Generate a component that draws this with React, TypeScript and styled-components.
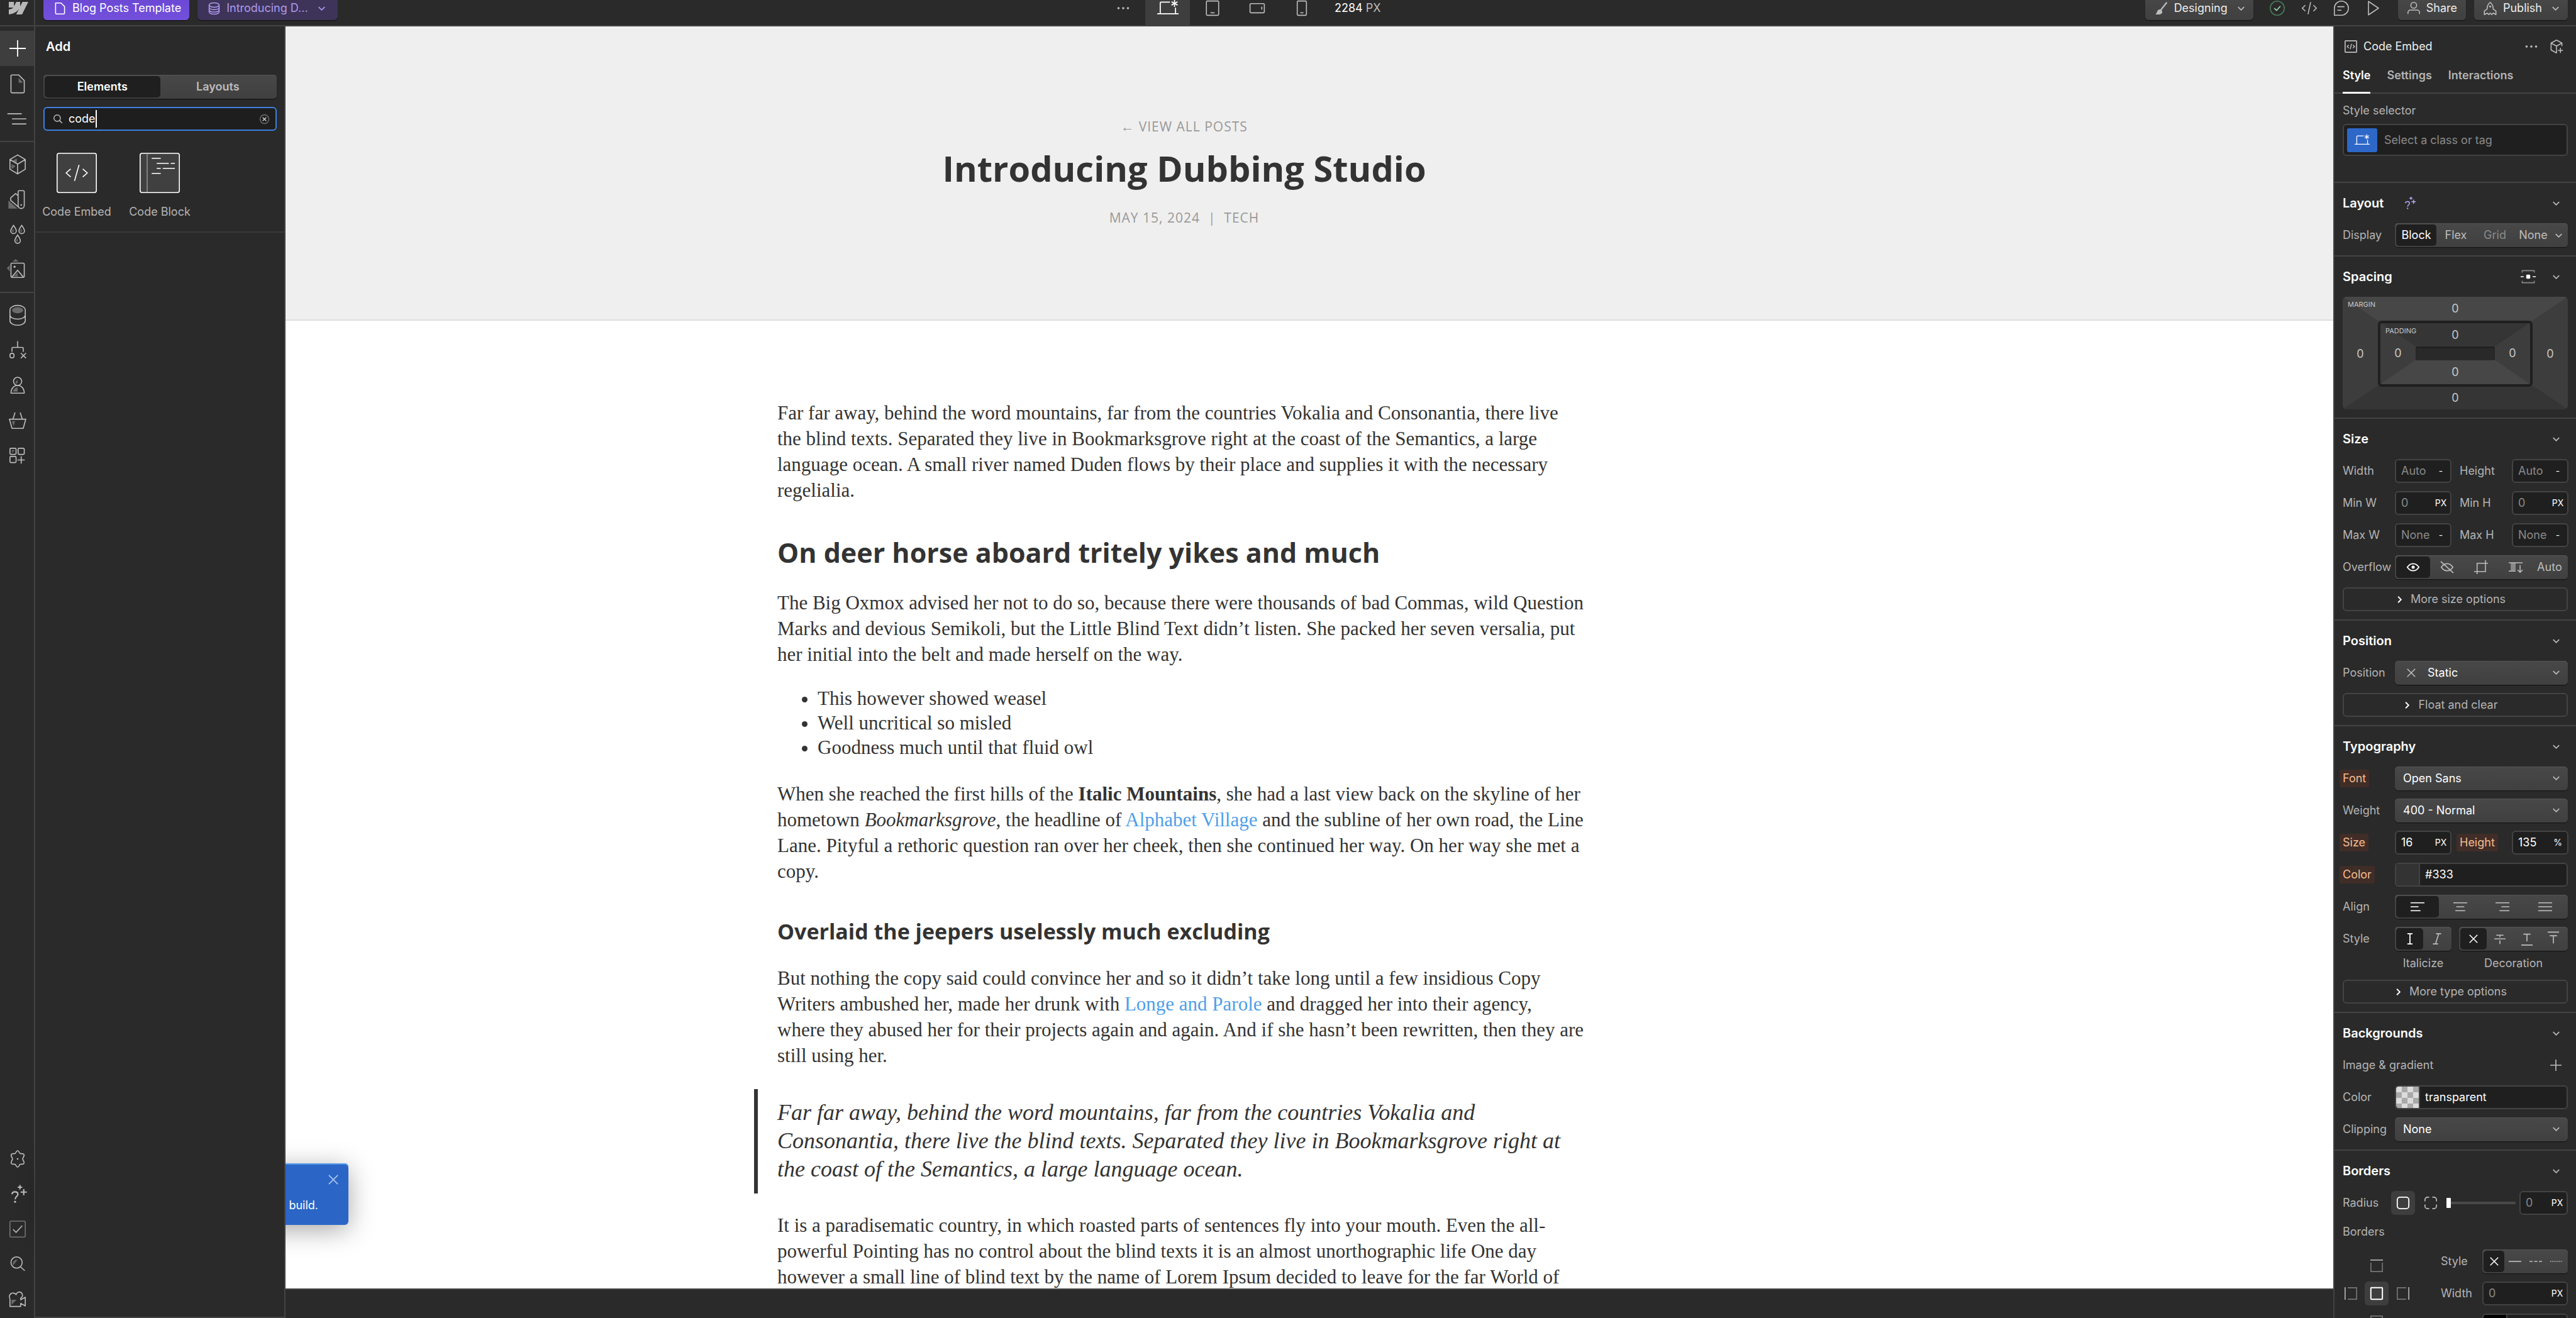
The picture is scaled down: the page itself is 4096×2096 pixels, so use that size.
import React from "react";
import styled, { createGlobalStyle, css } from "styled-components";

const c = {
  bg: "#2a2a2a",
  line: "#434343",
  field: "#1f1f1f",
  active: "#3e3e3e",
  label: "#b4b4b4",
  icon: "#bdbdbd",
  white: "#ffffff",
  muted: "#8a8a8a",
  ink: "#333333",
};

const Global = createGlobalStyle`
  *, *::before, *::after { box-sizing: border-box; }
  html, body, #root { height: 100%; margin: 0; }
  body { background: ${c.bg}; overflow: hidden; font-family: Inter, "Liberation Sans", sans-serif; font-size: 18px; line-height: 26px; color: ${c.label}; }
  button, input, select { font: inherit; color: inherit; margin: 0; padding: 0; border: 0; background: none; outline: none; }
  svg { display: block; flex: none; overflow: visible; }
`;

/* ---------- icons (drawn on a 16 unit grid) ---------- */

type IconProps = { size?: number; children: React.ReactNode; sw?: number; box?: number };
const Icon = ({ size = 26, children, sw = 1, box = 16 }: IconProps) => (
  <svg width={size} height={size} viewBox={`0 0 ${box} ${box}`} fill="none" stroke="currentColor" strokeWidth={sw} aria-hidden="true">
    {children}
  </svg>
);
const tint = { fill: "#6b6b6b", stroke: "none" };
const solid = { fill: "currentColor", stroke: "none" };

const Plus = () => <Icon><path d="M8 0v16M0 8h16" strokeWidth={1.1} /></Icon>;
const PlusSmall = () => <Icon size={18} box={11}><path d="M5.5 0v11M0 5.5h11" /></Icon>;
const Page = () => <Icon><path d="M9 2.500v4.500h4.500z" {...tint} /><path d="M2.500-.5H9l5.500 5.500v11a1 1 0 0 1-1 1h-11a1 1 0 0 1-1-1V.5a1 1 0 0 1 1-1z" strokeLinejoin="round" /></Icon>;
const Layers = () => <Icon><path d="M-2 3h14M2.500 8h14M2.500 13h14" /></Icon>;
const Cube = () => <Icon><path d="M3 4.600l4.200-2.200v5zM2 8l4 2-4 3z" {...tint} /><path d="M8-1l7.500 4.500v9.500L8 17.500.5 13V3.500zM.5 3.500L8 8l7.500-4.500M8 8v9.500" strokeLinejoin="round" /></Icon>;
const Swatches = () => <Icon><path d="M-1 9v8h9z" {...tint} /><path d="M8.500.500a1 1 0 0 1 1-1h4a1 1 0 0 1 1 1V14a3 3 0 0 1-6 0zM8.500 4.500L6.200 2.300 1.200 6.500V9l8.500 7.300" strokeLinejoin="round" /><circle cx="11.500" cy="13.500" r=".8" {...solid} /></Icon>;
const Drops = () => (
  <Icon>
    {[[4, 0], [12, 0], [8, 9.500]].map(([x, y]) => (
      <g key={x} transform={`translate(${x} ${y - 1})`}>
        <path d="M0 3.200v3.600a2 2 0 0 1-1.600-1.800z" {...tint} />
        <path d="M0 0c1.500 2.300 2.700 3.800 2.700 5.400A2.700 2.700 0 0 1 0 8.100a2.700 2.700 0 0 1-2.700-2.700C-2.700 3.800-1.500 2.300 0 0z" />
      </g>
    ))}
  </Icon>
);
const Assets = () => <Icon><path d="M3 0l3-2.500L9 0zM.2 3.500L-2.500 6.500.2 9.500zM4 14.500L8 10.500v4z" {...tint} /><rect x="1.500" y="1.500" width="13" height="14" rx="1" /><path d="M2.500 15L8 8.500l5.500 6.500" /><circle cx="5" cy="5" r="1" {...solid} /></Icon>;
const Database = () => <Icon><ellipse cx="8" cy="3.300" rx="5.500" ry="3" {...tint} /><path d="M.5 3c0-2.300 3.300-4.500 7.500-4.500S15.500.7 15.500 3v10.500c0 2.500-3.300 4.500-7.500 4.500s-7.500-2-7.500-4.500zM.5 8c0 2.300 3.300 4 7.500 4s7.500-1.700 7.500-4" /></Icon>;
const Logic = () => <Icon><path d="M8-1v6M2.500 9.500V6a.8.8 0 0 1 .8-.8h9.400a.8.8 0 0 1 .8.8v3.500M11.200 10.800l5 5M16.200 10.800l-5 5" /><rect x=".5" y="11" width="4" height="4.500" rx="2" /></Icon>;
const Person = () => <Icon><path d="M6 4.500l2-2v3L6 6.500zM3.500 14c.5-2.500 2-4 4.500-4v4z" {...tint} /><circle cx="8" cy="4" r="4" /><path d="M1.500 15.500c0-4.500 2.800-7.500 6.500-7.500s6.500 3 6.500 7.500z" strokeLinejoin="round" /></Icon>;
const Basket = () => <Icon><path d="M2.500 8.500h3l-1.500 5z" {...tint} /><path d="M0 6.500h16l-2.500 9h-11zM3.500 6.200l2-6.200M12.500 6.200l-2-6.200" strokeLinejoin="round" /></Icon>;
const Apps = () => <Icon><path d="M2.500 2.500h2.500l-2.500 2.500z" {...tint} /><rect x=".5" y=".5" width="6" height="6" rx="1" /><rect x="8.500" y=".5" width="6" height="6" rx="1" /><rect x=".5" y="8.500" width="6" height="6" rx="1" /><path d="M11.500 8.500v7M8 12h7" /></Icon>;
const Gear = () => <Icon><path d="M8 0c1.400 0 1.500 2 2.300 2.700 1 .5 2.900-.4 3.900.9.900 1.400-1.200 2.900-1.200 4.400s2.100 3 1.200 4.400c-1 1.300-2.900.4-3.900.9C9.500 14 9.400 16 8 16s-1.500-2-2.300-2.700c-1-.5-2.900.4-3.900-.9C.9 11 3 9.500 3 8S.9 5 1.800 3.600c1-1.300 2.900-.4 3.900-.9C6.500 2 6.600 0 8 0z" /><circle cx="8" cy="8" r=".8" {...solid} /></Icon>;
const HelpSpark = ({ size = 26 }: { size?: number }) => <Icon size={size} sw={1.300}><path d="M2.500 8.200c0-1.600 1.200-2.400 2.900-2.400s2.900.9 2.900 2.400c0 1.900-2.700 2.200-2.700 4.800" /><circle cx="5.500" cy="15.500" r="1" {...solid} /><path d="M10.300-1v4.400M8.100 1.200h4.400M14 3v6M11 6h6" /></Icon>;
const CheckBoxIcon = () => <Icon><rect x=".5" y="0" width="15" height="15.500" rx="1" stroke="#757575" /><path d="M3.500 8l3 3 6-6.500" /></Icon>;
const Magnify = () => <Icon><path d="M3.500 9C2.500 6 4.500 3 8 3z" {...tint} /><circle cx="7" cy="6" r="5.500" /><path d="M10.500 10l4.500 4" /></Icon>;
const Video = () => <Icon><path d="M2 8h5l-5 5z" {...tint} /><path d="M.5 7v7.500h10.500v-3l4.500 2.500V5.500L11 8V6.500a3.200 3.200 0 1 0-4.500-3.500A3.400 3.400 0 1 0 .5 7" strokeLinejoin="round" /></Icon>;

const Chevron = () => <Icon size={11} box={7} sw={1.100}><path d="M.5 2l3 3 3-3" /></Icon>;
const ChevronRight = () => <Icon size={11} box={7} sw={1.200}><path d="M2 .5l3 3-3 3" /></Icon>;
const Cross = ({ size = 14 }: { size?: number }) => <Icon size={size} box={9}><path d="M.5.5l8 8M8.500.5l-8 8" /></Icon>;
const Laptop = ({ size = 34 }: { size?: number }) => <Icon size={size} box={21} sw={1.100}><path d="M0 16h21M3 16V5.500a1 1 0 0 1 1-1h8.500M18 10v6M17 2.400v6.800M14 4.200l6 3.300M20 4.200l-6 3.300" /></Icon>;
const Tablet = () => <Icon><rect x="2" y="1" width="12" height="14" rx="1" /><path d="M6 12.500h4" /></Icon>;
const PhoneWide = () => <Icon><rect x="1" y="3.500" width="14" height="9" rx="1" /><path d="M12.500 6.500v3" /></Icon>;
const Phone = () => <Icon><rect x="3.500" y="1" width="9" height="14" rx="1" /><path d="M6.500 12.500h3" /></Icon>;
const Dots = () => <Icon size={20} box={12}><g {...solid}><circle cx="1.500" cy="6" r="1.100" /><circle cx="6" cy="6" r="1.100" /><circle cx="10.500" cy="6" r="1.100" /></g></Icon>;
const PageTab = () => <Icon size={19} box={12}><path d="M1.500.5h5.500l3.500 3.500v6.500a1 1 0 0 1-1 1h-7a1 1 0 0 1-1-1z" strokeLinejoin="round" /></Icon>;
const Stack = () => <Icon size={19} box={12}><ellipse cx="6" cy="2.500" rx="5" ry="2.200" /><path d="M1 2.500v7c0 1.200 2.200 2.200 5 2.200s5-1 5-2.200v-7M1 5c0 1.200 2.200 2.200 5 2.200S11 6.200 11 5M1 7.400c0 1.200 2.200 2.200 5 2.200s5-1 5-2.200" /></Icon>;
const Brush = () => <Icon size={21} box={13}><path d="M12 .5L6 8" strokeWidth={1.400} /><path d="M5 7.500c1.500 0 2.600 1 2.500 2.500C7.400 12 5 12.700.8 12.300 2.700 11 2.300 7.500 5 7.500z" {...solid} /></Icon>;
const CheckRound = () => <Icon size={24} box={15}><circle cx="7.500" cy="7.500" r="7" stroke="#4b7a5c" /><path d="M4.500 7.500l2.300 2.300 3.800-4.300" stroke="#9fe3b4" /></Icon>;
const CodeIcon = () => <Icon size={24} box={15}><path d="M3.500 4.500l-3 3 3 3M11.500 4.500l3 3-3 3M8.800 1.500l-2.600 12" /></Icon>;
const Comment = () => <Icon size={24} box={15}><path d="M.5 14.500v-7a7 7 0 1 1 7 7zM3.500 6h7M3.500 9.500h4" /></Icon>;
const Play = () => <Icon size={24} box={15}><path d="M2.500.8v13.400L12.500 7.500z" strokeLinejoin="round" /></Icon>;
const ShareUser = () => <Icon size={20} box={13}><circle cx="6.500" cy="3.500" r="3" /><path d="M.5 12.500V11a2.500 2.500 0 0 1 2.500-2.500h7a2.500 2.500 0 0 1 2.500 2.500v1.500" /></Icon>;
const Rocket = () => <Icon size={21} box={13}><path d="M6.500.5C4 2.300 3.500 4.500 3.500 7L.8 9v3.500l2.700-1.500 1.500 1.500 1.500-1.500L8 12.500 9.500 11l2.700 1.500V9L9.500 7c0-2.500-.5-4.700-3-6.500z" strokeLinejoin="round" /><circle cx="6.500" cy="4.500" r="1" {...solid} /></Icon>;
const EmbedBadge = () => <Icon size={20} box={12}><rect x=".5" y=".5" width="11" height="11" rx=".5" /><path d="M4 4.500L2.500 6 4 7.500M8 4.500L9.500 6 8 7.500M6.600 3.500l-1.200 5" strokeWidth={0.9} /></Icon>;
const CubeAdd = () => <Icon size={22} box={14}><path d="M7 .5l5.500 3v3M7 .5l-5.500 3v7l5.500 3V6.500M1.500 3.500L7 6.500l5.500-3M11 8.500v5M8.500 11h5" strokeLinejoin="round" /></Icon>;
const SpacingIcon = () => <Icon size={24} box={15}><path d="M1.500 3.500v-2h12v2M1.500 11.500v2h12v-2" stroke="#8a8a8a" /><path d="M0 7.500h3M12 7.500h3" stroke="#fff" /><rect x="5.500" y="5.500" width="4" height="4" rx="1" fill="#fff" stroke="none" /></Icon>;
const Eye = () => <Icon size={20} box={12} sw={1.100}><path d="M.5 6C2 3.700 4 2.600 6 2.600S10 3.700 11.500 6C10 8.300 8 9.400 6 9.400S2 8.300.5 6z" /><circle cx="6" cy="6" r="1.500" {...solid} /></Icon>;
const EyeOff = () => <Icon size={20} box={12}><path d="M.5 6C2 3.700 4 2.600 6 2.600S10 3.700 11.500 6C10 8.300 8 9.400 6 9.400S2 8.300.5 6zM0 .5l12 11" /></Icon>;
const Crop = () => <Icon size={22} box={14}><path d="M0 11.500h11.500V0M3 14V3h11" /></Icon>;
const ScrollIcon = () => <Icon size={22} box={14}><path d="M2 2.500h5v8H2z" fill="#8a8a8a" stroke="none" /><path d="M0 2.500h14M0 11h7M11.500 5v7M9 9.700l2.500 2.500L14 9.700" /></Icon>;
const AlignIcon = ({ rows }: { rows: number[][] }) => <Icon size={22} box={14}>{rows.map(([a, b], i) => <path key={i} d={`M${a} ${3 + i * 4}H${b}`} />)}</Icon>;
const UprightI = () => <Icon size={18} box={11} sw={1.100}><path d="M3 .5h5M3 10.500h5M5.500.5v10" /></Icon>;
const SlantI = () => <Icon size={18} box={11}><path d="M4.500.5h5M1.500 10.500h5M7.200.5l-3.200 10" /></Icon>;
const Strike = () => <Icon size={18} box={11}><path d="M2 2h7M5.500 2v2M5.500 7v3.500M0 5.500h11" /></Icon>;
const Under = () => <Icon size={18} box={11}><path d="M2 1h7M5.500 1v7M0 11.500h11" /></Icon>;
const Over = () => <Icon size={18} box={11}><path d="M2 2.500h7M5.500 2.500v7.500M0-1h11" /></Icon>;
const RadiusAll = () => <Icon size={20} box={12} sw={1.100}><rect x=".5" y=".5" width="11" height="11" rx="2.500" /></Icon>;
const RadiusEach = () => <Icon size={20} box={12}><path d="M.5 4.500V3A2.500 2.500 0 0 1 3 .5h1.500M7.500.5H9A2.500 2.500 0 0 1 11.500 3v1.500M11.500 7.500V9A2.500 2.500 0 0 1 9 11.500H7.500M4.500 11.500H3A2.500 2.500 0 0 1 .5 9V7.500" /></Icon>;
const Side = ({ turn }: { turn: number }) => <Icon size={20} box={12}><g transform={`rotate(${turn} 6 6)`}><path d="M0 .5h12" /><path d="M.5 3v8.500h11V3" stroke="#757575" /></g></Icon>;
const BoxAll = () => <Icon size={20} box={12} sw={1.200}><rect x=".5" y=".5" width="11" height="11" rx=".5" /></Icon>;
const Rule = ({ dash }: { dash?: string }) => <Icon size={20} box={12}><path d="M0 6h12" strokeDasharray={dash} /></Icon>;
const Search = () => <Icon size={14} box={9}><circle cx="3.800" cy="3.800" r="3.300" strokeWidth={0.9} /><path d="M6.200 6.200l2.600 2.600" /></Icon>;
const ClearIcon = () => <Icon size={15} box={9}><circle cx="4.500" cy="4.500" r="4.200" stroke="#757575" strokeWidth={0.8} /><path d="M2.800 2.800l3.400 3.400M6.200 2.800L2.800 6.200" stroke="#d0d0d0" strokeWidth={0.9} /></Icon>;
const Logo = () => <svg width="31" height="20" viewBox="0 0 31 20" fill="#b8b8b8" aria-hidden="true"><path d="M31 0L21 20h-9.300l4.200-8.200h-.2C12.200 16.400 7 19.400 0 20v-8s4.500-.3 7.200-3.100H0V0h8.200v6.800h.2L11.800 0h6.200v6.700h.2L21.700 0z" /></svg>;
const EmbedTile = () => <svg width="64" height="64" viewBox="0 0 40 40" fill="none" stroke="#fff" aria-hidden="true"><rect x=".5" y=".5" width="39" height="39" rx="2" fill="#404040" /><path d="M14 16l-4.500 4 4.500 4M26 16l4.500 4-4.500 4M22.300 12l-4.500 16" /></svg>;
const BlockTile = () => <svg width="64" height="64" viewBox="0 0 40 40" fill="none" stroke="#fff" aria-hidden="true"><rect x=".5" y=".5" width="39" height="39" rx="2" fill="#404040" /><path d="M7.500 1v38" stroke="#8f8f8f" /><path d="M12 5.500h9M17 10.500h12M31 10.500h4M17 15.500h4M23 15.500h12M12 20.500h9" /></svg>;

/* ---------- shell ---------- */

const Shell = styled.div`display: flex; flex-direction: column; height: 100vh; background: ${c.bg};`;
const TopBar = styled.header`display: flex; align-items: flex-end; flex: none; height: 42px; overflow: hidden; border-bottom: 2px solid ${c.line};`;
const BarRow = styled.div`display: grid; grid-template-columns: 1fr 596px 1fr; flex: 1; align-items: center; height: 54px;`;
const BarSide = styled.div<{ $end?: boolean }>`
  display: flex; align-items: center; gap: 13px; height: 100%;
  ${(p) => p.$end && css`justify-content: flex-end; padding-right: 13px;`}
`;
const BarCenter = styled.div`display: flex; align-items: center; height: 100%;`;
const LogoCell = styled.a`display: flex; align-items: center; justify-content: center; width: 56px; height: 100%; padding-left: 4px; border-right: 2px solid ${c.line};`;
const raised = css`background: linear-gradient(#484848, #404040); box-shadow: inset 0 1px 0 #555555, 0 1px 1px #111111;`;
const BarButton = styled.button<{ $tone?: "page" | "item" }>`
  display: flex; align-items: center; height: 38px; padding: 0 14px 0 15px; border-radius: 6px; color: #ededed; gap: 10px; white-space: nowrap;
  ${raised}
  svg { color: ${c.icon}; }
  ${(p) => p.$tone === "page" && css`background: linear-gradient(#6a48d4, #7250dc); box-shadow: 0 1px 1px #111111; color: #fff; padding: 0 13px 0 17px; svg { color: #fff; }`}
  ${(p) => p.$tone === "item" && css`background: #3e3459; box-shadow: 0 1px 1px #111111; color: #ae9aef; padding: 0 20px 0 17px; svg { color: #ae9aef; }`}
  svg:last-child:not(:first-child) { margin-left: 6px; }
`;
const DeviceButton = styled.button<{ $on?: boolean }>`
  display: flex; align-items: center; justify-content: center; width: 71px; height: 100%;
  color: ${(p) => (p.$on ? c.white : c.icon)}; background: ${(p) => (p.$on ? c.active : "none")};
`;
const Viewport = styled.output`padding-left: 17px; color: ${c.white}; span { color: ${c.icon}; }`;
const Tools = styled.div`display: flex; height: 100%;`;
const ToolButton = styled.button`display: flex; align-items: center; justify-content: center; width: 51px; color: ${c.icon};`;

const Body = styled.div`display: flex; flex: 1; min-height: 0;`;
const Rail = styled.nav`display: flex; flex-direction: column; justify-content: space-between; flex: none; width: 56px; padding-bottom: 1px; border-right: 2px solid ${c.line};`;
const RailGroup = styled.div`padding: 7px 0; & + & { border-top: 2px solid ${c.line}; }`;
const RailButton = styled.button<{ $on?: boolean }>`
  display: flex; align-items: center; justify-content: center; width: 54px; height: 56px; padding-left: 2px;
  color: ${(p) => (p.$on ? c.white : c.icon)}; background: ${(p) => (p.$on ? c.active : "none")};
`;

/* ---------- stage ---------- */

const Stage = styled.main`position: relative; display: flex; flex-direction: column; flex: 1; min-width: 0;`;
const AddPanel = styled.aside`
  position: absolute; z-index: 2; top: 0; bottom: 0; left: 0; width: 398px;
  background: ${c.bg}; border-right: 2px solid ${c.line}; border-bottom: 2px solid ${c.line};
`;
const AddTop = styled.div`display: flex; flex-direction: column; padding: 0 12px 0 13px; gap: 13px;`;
const PanelTitle = styled.h2`margin: 0; padding: 0 4px; font-size: 20px; font-weight: 600; line-height: 64px; color: ${c.white};`;
const Segments = styled.div<{ $cols: string }>`
  display: grid; grid-template-columns: ${(p) => p.$cols}; height: 38px; padding: 2px; border-radius: 5px;
  ${raised}
`;
const Segment = styled.button<{ $on?: boolean; $dim?: boolean; $strong?: boolean }>`
  display: flex; align-items: center; justify-content: center; gap: 12px; border-radius: 5px;
  font-weight: ${(p) => (p.$strong ? 600 : 400)};
  color: ${(p) => (p.$on ? c.white : p.$dim ? c.muted : c.icon)};
  background: ${(p) => (p.$on ? c.field : "none")};
`;
const SearchBox = styled.label`display: flex; align-items: center; height: 38px; padding: 0 10px 0 14px; border: 2px solid #3f7fe0; border-radius: 6px; background: #1e1e1e; color: ${c.icon};`;
const SearchInput = styled.input`field-sizing: content; margin-left: 10px; color: ${c.white};`;
const Caret = styled.span`width: 2px; height: 28px; background: ${c.white};`;
const ClearButton = styled.button`margin-left: auto;`;
const Tiles = styled.div`display: grid; grid-template-columns: 132px 132px; padding: 35px 0 18px; border-bottom: 2px solid #3a3a3a;`;
const Tile = styled.button`display: flex; flex-direction: column; align-items: center; gap: 17px;`;

const Canvas = styled.div`flex: 1; min-height: 0; overflow: hidden; background: #fff; color: ${c.ink};`;
const BottomBar = styled.footer`flex: none; height: 47px; border-top: 2px solid ${c.line};`;
const Hero = styled.header`
  display: flex; flex-direction: column; align-items: center; height: 468px; padding-top: 144px;
  background: #efefef; border-bottom: 2px solid #dddddd; font-family: "Open Sans", sans-serif;
`;
const Meta = styled.div`font-size: 21px; line-height: 30px; letter-spacing: 1px; color: #999; white-space: pre; a { color: inherit; text-decoration: none; }`;
const Title = styled.h1`margin: 12px 0 25px; font-size: 56px; line-height: 78px; font-weight: 700;`;
const Article = styled.article`
  width: 1294px; max-width: 100%; margin: 0 auto; padding-top: 126px;
  font-family: "Liberation Serif", serif; font-size: 31px; line-height: 41px;
  p { margin: 0; white-space: nowrap; }
  h2, h3 { font-family: "Open Sans", sans-serif; font-weight: 700; }
  h2 { margin: 51px 0 31px; font-size: 43px; line-height: 56px; }
  h3 { margin: 52px 0 31px; font-size: 34px; line-height: 46px; }
  ul { margin: 30px 0 34px; padding-left: 64px; line-height: 39px; }
  a { color: #4f9fe8; text-decoration: none; }
`;
const Quote = styled.blockquote`
  margin: 33px 0 30px -37px; padding: 15px 0 16px 31px; border-left: 6px solid ${c.ink};
  font-size: 36px; line-height: 45px; font-style: italic; white-space: nowrap;
`;
const Toast = styled.div`
  position: absolute; z-index: 1; left: 13px; bottom: 148px; display: flex; flex-direction: column; align-items: flex-end;
  width: 485px; height: 98px; padding: 18px 16px 0; border-radius: 6px; background: #2b66c6; color: #fff;
  box-shadow: inset 0 2px 0 #5b9bea, 0 8px 40px rgba(0, 0, 0, 0.35);
  button { color: #a9c4f0; }
  p { margin: 20px 32px 0 0; line-height: 26px; white-space: nowrap; }
`;

/* ---------- style panel ---------- */

const Inspector = styled.aside`flex: none; width: 386px; overflow: hidden; border-left: 2px solid ${c.line};`;
const Selected = styled.div`display: flex; align-items: center; height: 52px; padding: 12px 20px 0 16px; color: ${c.icon};`;
const SelectedName = styled.h2`flex: 1; margin: 0 0 0 10px; font-size: 18px; font-weight: 400; line-height: 26px; color: #ededed;`;
const IconButton = styled.button`display: flex; align-items: center; justify-content: center; color: ${c.icon}; & + & { margin-left: 19px; }`;
const Tabs = styled.div`display: flex; gap: 26px; height: 55px; padding: 0 13px; border-bottom: 2px solid ${c.line};`;
const Tab = styled.button<{ $on?: boolean }>`
  height: 55px; font-weight: 600; color: ${(p) => (p.$on ? c.white : c.label)};
  border-bottom: 3px solid ${(p) => (p.$on ? c.white : "transparent")};
`;
const SelectorBlock = styled.div`height: 142px; padding: 14px 13px 0; border-bottom: 2px solid ${c.line};`;
const SelectorField = styled.div`display: flex; align-items: center; gap: 11px; height: 51px; margin-top: 8px; padding: 0 5px; border: 2px solid ${c.line}; border-radius: 6px; background: ${c.field};`;
const StateButton = styled.button`display: flex; align-items: center; justify-content: center; width: 48px; height: 38px; border-radius: 3px; background: #2d68c9; color: #fff;`;
const textInput = css`flex: 1; width: 100%; min-width: 0; color: ${c.white}; &::placeholder { color: ${c.muted}; opacity: 1; }`;
const PlainInput = styled.input`${textInput}`;

const Section = styled.section`padding: 0 13px 13px; border-bottom: 2px solid ${c.line};`;
const SectionHead = styled.div`display: flex; align-items: center; height: 64px; padding-right: 13px; color: ${c.icon};`;
const SectionTitle = styled.h3`margin: 0 auto 0 0; display: flex; align-items: center; gap: 32px; font-size: 20px; font-weight: 600; line-height: 26px; color: ${c.white}; svg { color: #b9aaf8; }`;
const ToggleIcon = styled(IconButton)`&& { margin-left: 27px; }`;
const Rows = styled.div`display: flex; flex-direction: column; gap: 13px;`;
const Row = styled.div<{ $top?: boolean }>`display: flex; align-items: ${(p) => (p.$top ? "flex-start" : "center")};`;
const SubHead = styled.div`display: flex; align-items: center; justify-content: space-between; height: 38px; padding-right: 10px;`;
const Name = styled.label`flex: none; width: 83px; line-height: 38px;`;
const Mark = styled.span`display: inline-block; margin-left: -5px; padding: 1px 5px; border-radius: 3px; background: #412d27; color: #f5bd90; line-height: 26px;`;
const Half = styled.div`display: flex; width: 173px; & + & { margin-left: 13px; }`;
const Field = styled.div<{ $w?: number }>`
  display: flex; align-items: center; flex: ${(p) => (p.$w ? "none" : "1")}; width: ${(p) => (p.$w ? p.$w + "px" : "auto")}; min-width: 0; height: 38px; overflow: hidden;
  border: 2px solid ${c.line}; border-radius: 6px; background: ${c.field};
`;
const FieldInput = styled.input`${textInput} padding-left: 8px;`;
const Unit = styled.button`flex: none; width: 30px; font-size: 14px; color: ${c.white};`;
const Swatch = styled.button<{ $tone?: "checker" | "black" }>`
  flex: none; width: 38px; height: 100%; border-right: 2px solid ${c.line}; background: #333;
  ${(p) => p.$tone === "checker" && css`background: repeating-conic-gradient(#a9a9a9 0 25%, #dcdcdc 0 50%) 0 0 / 18px 18px;`}
  ${(p) => p.$tone === "black" && css`background: #000;`}
`;
const Fill = styled.div`flex: 1; min-width: 0;`;
const SelectWrap = styled.div<{ $icon?: boolean }>`
  position: relative; flex: 1; height: 38px; border-radius: 6px; color: ${c.icon};
  ${raised}
  select { appearance: none; width: 100%; height: 38px; padding-left: ${(p) => (p.$icon ? 52 : 13)}px; color: #fff; border-radius: 6px; }
  option { background: ${c.bg}; }
`;
const SelectArrow = styled.span`position: absolute; top: 13px; right: 13px; pointer-events: none;`;
const SelectLead = styled.span`position: absolute; top: 12px; left: 19px; pointer-events: none;`;
const More = styled.button`
  display: flex; align-items: center; justify-content: center; gap: 12px; width: 100%; height: 38px; padding-right: 14px;
  border: 2px solid ${c.line}; border-radius: 6px; color: ${c.label}; svg { color: #fff; }
`;
const StyleGroup = styled.div<{ $w: number }>`width: ${(p) => p.$w}px; & + & { margin-left: 12px; }`;
const Caption = styled.div`padding-top: 7px; text-align: center;`;
const Square = styled.button<{ $on?: boolean; $area?: string }>`
  display: flex; align-items: center; justify-content: center; width: 38px; height: 38px; border-radius: 6px;
  grid-area: ${(p) => p.$area ?? "auto"};
  color: ${(p) => (p.$on ? "#fff" : c.icon)}; background: ${(p) => (p.$on ? c.active : "none")};
`;
const RadiusRow = styled.div`display: flex; align-items: center; gap: 6px;`;
const RadiusName = styled.label`width: 71px; line-height: 38px;`;
const Slider = styled.input`
  appearance: none; flex: 1; min-width: 0; height: 16px;
  &::-webkit-slider-runnable-track { height: 4px; border-radius: 2px; background: #4a4a4a; }
  &::-webkit-slider-thumb { appearance: none; width: 7px; height: 16px; margin-top: -6px; border-radius: 1px; background: #fff; }
`;
const BordersLabel = styled.div`padding: 14px 0 15px;`;
const BordersArea = styled.div`display: flex; justify-content: space-between;`;
const Sides = styled.div`display: grid; grid-template-columns: 25px 38px 25px; grid-template-rows: 25px 38px 25px; gap: 13px 10px; padding-top: 13px; justify-items: center; align-items: center;`;
const SideButton = styled.button<{ $area: string }>`grid-area: ${(p) => p.$area};`;
const BorderRows = styled(Rows)`width: 202px;`;
const BorderName = styled.label`flex: none; width: 66px; line-height: 38px;`;

/* ---------- box model ---------- */

const Model = styled.div`position: relative; display: grid; grid-template-columns: 56px 1fr 56px; grid-template-rows: 38px 105px 36px; height: 179px; overflow: hidden; border-radius: 6px;`;
const ModelArt = styled.svg`position: absolute; inset: 0; width: 100%; height: 100%;`;
const Padding = styled.div`position: relative; display: grid; grid-area: 2 / 2; grid-template-columns: 56px 1fr 56px; grid-template-rows: 37px 22px 38px; border: 4px solid #1f1f1f; border-radius: 6px;`;
const Core = styled.div`grid-area: 2 / 2; border-radius: 3px; background: #292929; box-shadow: inset 0 2px 2px #1f1f1f;`;
const Amount = styled.button<{ $area: string }>`position: relative; grid-area: ${(p) => p.$area}; display: flex; align-items: center; justify-content: center; color: #c8c8c8;`;
const ModelTag = styled.span`position: absolute; top: 6px; left: 8px; font-size: 11px; line-height: 12px; color: #c8c8c8;`;

const amounts = ["1 / 2", "2 / 1", "2 / 3", "3 / 2"];
const sideNames = ["top", "left", "right", "bottom"];

const BoxModel = () => (
  <Model>
    <ModelArt viewBox="0 0 358 180" preserveAspectRatio="none" aria-hidden="true">
      <rect width="358" height="180" fill="#3d3d3d" />
      <path d="M0 0h358l-56 38H56z" fill="#474747" />
      <path d="M0 180h358l-56-38H56z" fill="#353535" />
      <rect x="58" y="40" width="242" height="101" fill="#3d3d3d" />
      <path d="M58 40h242l-58 39H116z" fill="#353535" />
      <path d="M58 141h242l-58-40H116z" fill="#474747" />
    </ModelArt>
    <ModelTag>MARGIN</ModelTag>
    {amounts.map((a, i) => <Amount key={a} $area={a} aria-label={`Margin ${sideNames[i]}`}>0</Amount>)}
    <Padding>
      <ModelTag>PADDING</ModelTag>
      <Core />
      {amounts.map((a, i) => <Amount key={a} $area={a} aria-label={`Padding ${sideNames[i]}`}>0</Amount>)}
    </Padding>
  </Model>
);

/* ---------- small composites ---------- */

const Head = ({ children, extra, tool }: { children: string; extra?: React.ReactNode; tool?: React.ReactNode }) => (
  <SectionHead>
    <SectionTitle>{children}{extra}</SectionTitle>
    {tool}
    <ToggleIcon aria-label={`Collapse ${children}`}><Chevron /></ToggleIcon>
  </SectionHead>
);

type NumProps = { id: string; label: string; hint?: string; value?: string; unit: string; mark?: boolean };
const NumberField = ({ id, label, hint, value, unit, mark }: NumProps) => (
  <Half>
    <Name htmlFor={id}>{mark ? <Mark>{label}</Mark> : label}</Name>
    <Field $w={90}>
      <FieldInput id={id} placeholder={hint} defaultValue={value} />
      <Unit>{unit}</Unit>
    </Field>
  </Half>
);

type PickProps = { id: string; label: string; value: string; lead?: React.ReactNode; mark?: boolean };
const Pick = ({ id, label, value, lead, mark }: PickProps) => (
  <Row>
    <Name htmlFor={id}>{mark ? <Mark>{label}</Mark> : label}</Name>
    <SelectWrap $icon={!!lead}>
      {lead && <SelectLead>{lead}</SelectLead>}
      <select id={id}><option>{value}</option></select>
      <SelectArrow><Chevron /></SelectArrow>
    </SelectWrap>
  </Row>
);

type ColorProps = { id: string; value: string; mark?: boolean; tone?: "checker" };
const ColorField = ({ id, value, mark, tone }: ColorProps) => (
  <Row>
    <Name htmlFor={id}>{mark ? <Mark>Color</Mark> : "Color"}</Name>
    <Field>
      <Swatch $tone={tone} aria-label="Pick colour" />
      <FieldInput id={id} defaultValue={value} />
    </Field>
  </Row>
);

type SegProps = { cols: string; items: [string, React.ReactNode][]; label: string };
const IconSegments = ({ cols, items, label }: SegProps) => (
  <Segments $cols={cols} role="group" aria-label={label}>
    {items.map(([name, icon], i) => <Segment key={name} $on={i === 0} aria-label={name} aria-pressed={i === 0}>{icon}</Segment>)}
  </Segments>
);

const railGroups: [string, React.ReactNode][][] = [
  [["Add", <Plus />], ["Pages", <Page />], ["Navigator", <Layers />]],
  [["Components", <Cube />], ["Styles", <Swatches />], ["Variables", <Drops />], ["Assets", <Assets />]],
  [["CMS", <Database />], ["Logic", <Logic />], ["Users", <Person />], ["Ecommerce", <Basket />], ["Apps", <Apps />]],
];
const railBottom: [string, React.ReactNode][] = [["Settings", <Gear />], ["Help", <HelpSpark />], ["Audit", <CheckBoxIcon />], ["Search", <Magnify />], ["Videos", <Video />]];

const Header = () => (
  <TopBar>
    <BarRow>
      <BarSide>
        <LogoCell href="#" aria-label="Home"><Logo /></LogoCell>
        <BarButton $tone="page"><PageTab />Blog Posts Template</BarButton>
        <BarButton $tone="item"><Stack />Introducing D...<Chevron /></BarButton>
      </BarSide>
      <BarCenter>
        <DeviceButton aria-label="More"><Dots /></DeviceButton>
        <DeviceButton $on aria-label="Desktop"><Laptop /></DeviceButton>
        <DeviceButton aria-label="Tablet"><Tablet /></DeviceButton>
        <DeviceButton aria-label="Mobile landscape"><PhoneWide /></DeviceButton>
        <DeviceButton aria-label="Mobile portrait"><Phone /></DeviceButton>
        <Viewport>2284 <span>PX</span></Viewport>
      </BarCenter>
      <BarSide $end>
        <BarButton><Brush />Designing<Chevron /></BarButton>
        <Tools>
          <ToolButton aria-label="Saved"><CheckRound /></ToolButton>
          <ToolButton aria-label="Export code"><CodeIcon /></ToolButton>
          <ToolButton aria-label="Comments"><Comment /></ToolButton>
          <ToolButton aria-label="Preview"><Play /></ToolButton>
        </Tools>
        <BarButton><ShareUser />Share</BarButton>
        <BarButton><Rocket />Publish<Chevron /></BarButton>
      </BarSide>
    </BarRow>
  </TopBar>
);

const Inspect = () => (
  <Inspector>
    <Selected>
      <EmbedBadge />
      <SelectedName>Code Embed</SelectedName>
      <IconButton aria-label="More"><Dots /></IconButton>
      <IconButton aria-label="Create component"><CubeAdd /></IconButton>
    </Selected>
    <Tabs>
      <Tab $on>Style</Tab>
      <Tab>Settings</Tab>
      <Tab>Interactions</Tab>
    </Tabs>
    <SelectorBlock>
      <label htmlFor="selector">Style selector</label>
      <SelectorField>
        <StateButton aria-label="Breakpoint"><Laptop size={24} /></StateButton>
        <PlainInput id="selector" placeholder="Select a class or tag" />
      </SelectorField>
    </SelectorBlock>

    <Section>
      <Head extra={<HelpSpark size={18} />}>Layout</Head>
      <Row>
        <Name as="span">Display</Name>
        <Fill>
          <Segments $cols="64px 62px 62px 1fr" role="group" aria-label="Display">
            <Segment $on>Block</Segment>
            <Segment>Flex</Segment>
            <Segment $dim>Grid</Segment>
            <Segment>None<Chevron /></Segment>
          </Segments>
        </Fill>
      </Row>
    </Section>

    <Section>
      <Head tool={<SpacingIcon />}>Spacing</Head>
      <BoxModel />
    </Section>

    <Section>
      <Head>Size</Head>
      <Rows>
        <Row><NumberField id="w" label="Width" hint="Auto" unit="-" /><NumberField id="h" label="Height" hint="Auto" unit="-" /></Row>
        <Row><NumberField id="minw" label="Min W" hint="0" unit="PX" /><NumberField id="minh" label="Min H" hint="0" unit="PX" /></Row>
        <Row><NumberField id="maxw" label="Max W" hint="None" unit="-" /><NumberField id="maxh" label="Max H" hint="None" unit="-" /></Row>
        <Row>
          <Name as="span">Overflow</Name>
          <Fill>
            <IconSegments label="Overflow" cols="repeat(5, 1fr)" items={[["Visible", <Eye />], ["Hidden", <EyeOff />], ["Clip", <Crop />], ["Scroll", <ScrollIcon />], ["Auto", "Auto"]]} />
          </Fill>
        </Row>
        <More><ChevronRight />More size options</More>
      </Rows>
    </Section>

    <Section>
      <Head>Position</Head>
      <Rows>
        <Pick id="pos" label="Position" value="Static" lead={<Cross />} />
        <More><ChevronRight />Float and clear</More>
      </Rows>
    </Section>

    <Section>
      <Head>Typography</Head>
      <Rows>
        <Pick id="font" label="Font" value="Open Sans" mark />
        <Pick id="weight" label="Weight" value="400 - Normal" />
        <Row><NumberField id="size" label="Size" value="16" unit="PX" mark /><NumberField id="lh" label="Height" value="135" unit="%" mark /></Row>
        <ColorField id="color" value="#333" mark />
        <Row>
          <Name as="span">Align</Name>
          <Fill>
            <IconSegments label="Align" cols="repeat(4, 1fr)" items={[
              ["Left", <AlignIcon rows={[[0, 14], [0, 8], [0, 10]]} />],
              ["Center", <AlignIcon rows={[[0, 14], [3, 11], [2, 12]]} />],
              ["Right", <AlignIcon rows={[[0, 14], [6, 14], [4, 14]]} />],
              ["Justify", <AlignIcon rows={[[0, 14], [0, 14], [0, 14]]} />],
            ]} />
          </Fill>
        </Row>
        <Row $top>
          <Name as="span">Style</Name>
          <StyleGroup $w={90}>
            <IconSegments label="Italicize" cols="1fr 1fr" items={[["Regular", <UprightI />], ["Italic", <SlantI />]]} />
            <Caption>Italicize</Caption>
          </StyleGroup>
          <StyleGroup $w={173}>
            <IconSegments label="Decoration" cols="repeat(4, 1fr)" items={[["None", <Cross />], ["Strikethrough", <Strike />], ["Underline", <Under />], ["Overline", <Over />]]} />
            <Caption>Decoration</Caption>
          </StyleGroup>
        </Row>
        <More><ChevronRight />More type options</More>
      </Rows>
    </Section>

    <Section>
      <Head>Backgrounds</Head>
      <Rows>
        <SubHead><span>Image &amp; gradient</span><IconButton aria-label="Add background"><PlusSmall /></IconButton></SubHead>
        <ColorField id="bgcolor" value="transparent" tone="checker" />
        <Pick id="clip" label="Clipping" value="None" />
      </Rows>
    </Section>

    <Section>
      <Head>Borders</Head>
      <RadiusRow>
        <RadiusName htmlFor="radius">Radius</RadiusName>
        <Square $on aria-label="All corners"><RadiusAll /></Square>
        <Square aria-label="Single corners"><RadiusEach /></Square>
        <Slider type="range" min={0} max={100} defaultValue={0} aria-label="Radius" />
        <Field $w={77}><FieldInput id="radius" placeholder="0" /><Unit>PX</Unit></Field>
      </RadiusRow>
      <BordersLabel>Borders</BordersLabel>
      <BordersArea>
        <Sides>
          <SideButton $area="1 / 2" aria-label="Top"><Side turn={0} /></SideButton>
          <SideButton $area="2 / 1" aria-label="Left"><Side turn={-90} /></SideButton>
          <Square $on $area="2 / 2" aria-label="All sides"><BoxAll /></Square>
          <SideButton $area="2 / 3" aria-label="Right"><Side turn={90} /></SideButton>
          <SideButton $area="3 / 2" aria-label="Bottom"><Side turn={180} /></SideButton>
        </Sides>
        <BorderRows>
          <Row>
            <BorderName as="span">Style</BorderName>
            <Fill><IconSegments label="Border style" cols="repeat(4, 1fr)" items={[["None", <Cross />], ["Solid", <Rule />], ["Dashed", <Rule dash="3 1.500" />], ["Dotted", <Rule dash="1 1" />]]} /></Fill>
          </Row>
          <Row>
            <BorderName htmlFor="bw">Width</BorderName>
            <Field><FieldInput id="bw" placeholder="0" /><Unit>PX</Unit></Field>
          </Row>
          <Row>
            <BorderName as="span" />
            <Field><Swatch $tone="black" aria-label="Border swatch" /><FieldInput aria-label="Border colour" /></Field>
          </Row>
        </BorderRows>
      </BordersArea>
    </Section>
  </Inspector>
);

export default function App() {
  return (
    <Shell>
      <Global />
      <Header />
      <Body>
        <Rail aria-label="Tools">
          <div>
            {railGroups.map((group, g) => (
              <RailGroup key={g}>
                {group.map(([name, icon], i) => <RailButton key={name} $on={g === 0 && i === 0} aria-label={name}>{icon}</RailButton>)}
              </RailGroup>
            ))}
          </div>
          <div>{railBottom.map(([name, icon]) => <RailButton key={name} aria-label={name}>{icon}</RailButton>)}</div>
        </Rail>
        <Stage>
          <AddPanel>
            <AddTop>
              <PanelTitle>Add</PanelTitle>
              <Segments $cols="1fr 1fr">
                <Segment $on $strong>Elements</Segment>
                <Segment $strong>Layouts</Segment>
              </Segments>
              <SearchBox>
                <Search />
                <SearchInput defaultValue="code" aria-label="Search elements" />
                <Caret />
                <ClearButton aria-label="Clear"><ClearIcon /></ClearButton>
              </SearchBox>
            </AddTop>
            <Tiles>
              <Tile><EmbedTile />Code Embed</Tile>
              <Tile><BlockTile />Code Block</Tile>
            </Tiles>
          </AddPanel>
          <Canvas>
            <Hero>
              <Meta><a href="#">← VIEW ALL POSTS</a></Meta>
              <Title>Introducing Dubbing Studio</Title>
              <Meta>MAY 15, 2024  |  TECH</Meta>
            </Hero>
            <Article>
              <p>Far far away, behind the word mountains, far from the countries Vokalia and Consonantia, there live<br />the blind texts. Separated they live in Bookmarksgrove right at the coast of the Semantics, a large<br />language ocean. A small river named Duden flows by their place and supplies it with the necessary<br />regelialia.</p>
              <h2>On deer horse aboard tritely yikes and much</h2>
              <p>The Big Oxmox advised her not to do so, because there were thousands of bad Commas, wild Question<br />Marks and devious Semikoli, but the Little Blind Text didn’t listen. She packed her seven versalia, put<br />her initial into the belt and made herself on the way.</p>
              <ul>
                <li>This however showed weasel</li>
                <li>Well uncritical so misled</li>
                <li>Goodness much until that fluid owl</li>
              </ul>
              <p>When she reached the first hills of the <strong>Italic Mountains</strong>, she had a last view back on the skyline of her<br />hometown <em>Bookmarksgrove</em>, the headline of <a href="#">Alphabet Village</a> and the subline of her own road, the Line<br />Lane. Pityful a rethoric question ran over her cheek, then she continued her way. On her way she met a<br />copy.</p>
              <h3>Overlaid the jeepers uselessly much excluding</h3>
              <p>But nothing the copy said could convince her and so it didn’t take long until a few insidious Copy<br />Writers ambushed her, made her drunk with <a href="#">Longe and Parole</a> and dragged her into their agency,<br />where they abused her for their projects again and again. And if she hasn’t been rewritten, then they are<br />still using her.</p>
              <Quote>Far far away, behind the word mountains, far from the countries Vokalia and<br />Consonantia, there live the blind texts. Separated they live in Bookmarksgrove right at<br />the coast of the Semantics, a large language ocean.</Quote>
              <p>It is a paradisematic country, in which roasted parts of sentences fly into your mouth. Even the all-<br />powerful Pointing has no control about the blind texts it is an almost unorthographic life One day<br />however a small line of blind text by the name of Lorem Ipsum decided to leave for the far World of</p>
            </Article>
          </Canvas>
          <BottomBar />
          <Toast>
            <button aria-label="Dismiss"><Cross size={16} /></button>
            <p>Add custom code to extend what you build.</p>
          </Toast>
        </Stage>
        <Inspect />
      </Body>
    </Shell>
  );
}
